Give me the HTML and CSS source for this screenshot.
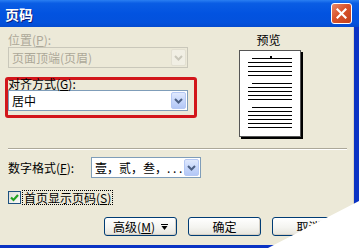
FILE: index.html
```html
<!DOCTYPE html>
<html lang="zh-CN">
<head>
  <meta charset="UTF-8">
  <title>页码</title>
  <link rel="stylesheet" href="styles.css">
</head>
<body>
  <div class="window">
    <div class="titlebar">
      <span class="title">页码</span>
      <span class="close">
        <svg width="11" height="11" viewBox="0 0 11 11"><path d="M1.5 1.5 L9.5 9.5 M9.5 1.5 L1.5 9.5" stroke="#fff" stroke-width="2.2" stroke-linecap="square"/></svg>
      </span>
    </div>
    <div class="frame">
      <div class="client">
        <div class="top">
          <div class="left">
            <div class="label is-disabled">位置(<u>P</u>):</div>
            <div class="combo is-disabled">
              <span class="value">页面顶端(页眉)</span>
              <span class="arrow"><svg width="9" height="6" viewBox="0 0 9 6"><path d="M1 1 L4.5 4.5 L8 1" fill="none" stroke="#c9c7ba" stroke-width="2"/></svg></span>
            </div>
            <!-- 红框标注 -->
            <div class="mark">
              <div class="label">对齐方式(<u>G</u>):</div>
              <div class="combo">
                <span class="value">居中</span>
                <span class="arrow"><svg width="9" height="6" viewBox="0 0 9 6"><path d="M1 1 L4.5 4.5 L8 1" fill="none" stroke="#4d6185" stroke-width="2"/></svg></span>
              </div>
            </div>
          </div>
          <div class="preview">
            <div class="preview-title">预览</div>
            <div class="page">
              <svg width="60" height="85" viewBox="0 0 60 85">
                <g stroke="#000" stroke-width="1">
                  <path d="M12 7.5 H52"/>
                  <path d="M8 11.5 H52 M8 15.5 H52 M8 20.5 H52 M8 24.5 H52"/>
                  <path d="M12 32.5 H52"/>
                  <path d="M8 36.5 H52 M8 40.5 H52 M8 44.5 H52 M8 48.5 H52"/>
                  <path d="M12 56.5 H52"/>
                  <path d="M8 60.5 H52 M8 64.5 H52 M8 68.5 H52 M8 72.5 H52 M8 76.5 H52"/>
                </g>
                <rect x="30" y="5" width="2" height="2" fill="#000"/>
              </svg>
            </div>
          </div>
        </div>
        <div class="sep"></div>
        <div class="format">
          <span class="label">数字格式(<u>F</u>):</span>
          <div class="combo narrow">
            <span class="value">壹，贰，叁，. . .</span>
            <span class="arrow"><svg width="9" height="6" viewBox="0 0 9 6"><path d="M1 1 L4.5 4.5 L8 1" fill="none" stroke="#4d6185" stroke-width="2"/></svg></span>
          </div>
        </div>
        <div class="check-row">
          <span class="check">
            <svg width="11" height="11" viewBox="0 0 11 11"><path d="M2 5.5 L4.5 8 L9 3" fill="none" stroke="#21a121" stroke-width="2.2"/></svg>
          </span>
          <span class="focus">首页显示页码(<u>S</u>)</span>
        </div>
        <div class="buttons">
          <button class="btn">高级(<u>M</u>)
            <svg class="more" width="7" height="8" viewBox="0 0 7 8"><path d="M0 1.5 H7" stroke="#000"/><path d="M0.5 3 H6.5 L3.5 7 Z" fill="#000"/></svg>
          </button>
          <button class="btn">确定</button>
          <button class="btn">取消</button>
        </div>
      </div>
    </div>
    <div class="curl"></div>
  </div>
</body>
</html>
```

FILE: styles.css
```css
/* 基础 */
body{
  margin:0;
  font-family:"Noto Sans CJK SC","Liberation Sans",sans-serif;
  font-size:12px;
  color:#000;
}
u{
  text-decoration:underline;
}
.window{
  width:359px;
  height:248px;
  position:relative;
  overflow:hidden;
  display:flex;
  flex-direction:column;
  background:#0831d9;
}
/* 标题栏 */
.titlebar{
  height:27px;
  flex:none;
  display:flex;
  align-items:center;
  justify-content:space-between;
  padding:0 7px 0 5px;
  background:linear-gradient(#2a7ff2 0%,#0a5de4 12%,#0253e0 50%,#0351dc 85%,#044bcf 100%);
  box-sizing:border-box;
}
.title{
  color:#fff;
  font-size:14px;
  font-weight:bold;
  text-shadow:1px 1px 0 #0a1e7a;
}
.close{
  width:21px;
  height:21px;
  box-sizing:border-box;
  border:1px solid #fff;
  border-radius:3px;
  background:linear-gradient(135deg,#e9896a 0%,#d9532c 45%,#c2401c 100%);
  display:flex;
  align-items:center;
  justify-content:center;
}
.close svg{
  display:block;
}
.frame{
  flex:1;
  display:flex;
  padding:0 5px 3px 0;
  background:#0a33c4;
}
.client{
  flex:1;
  background:#ece9d8;
  border-right:1px solid #d8d4c4;
  display:flex;
  flex-direction:column;
}
/* 上部 */
.top{
  display:flex;
  align-items:flex-start;
  padding:6px 0 0 8px;
}
.left{
  width:186px;
}
.label{
  line-height:14px;
  white-space:nowrap;
}
.label.is-disabled{
  color:#aca899;
}
.combo{
  width:180px;
  height:21px;
  box-sizing:border-box;
  border:1px solid #7f9db9;
  background:#fff;
  display:flex;
  align-items:center;
  padding:1px;
}
.combo .value{
  flex:1;
  padding-left:2px;
  white-space:nowrap;
  line-height:17px;
}
.combo .arrow{
  width:15px;
  height:17px;
  box-sizing:border-box;
  border:1px solid #b5c8f4;
  border-radius:2px;
  background:linear-gradient(#e0e9fd,#c3d4fa 60%,#b3c7f6);
  display:flex;
  align-items:center;
  justify-content:center;
}
.combo .arrow svg{
  display:block;
}
.combo.is-disabled{
  border-color:#c9c7ba;
  background:#ece9d8;
}
.combo.is-disabled .value{
  color:#aca899;
}
.combo.is-disabled .arrow{
  border-color:#e3e0d2;
  background:#f1efe4;
}
.mark{
  margin:9px -3px 0 -3px;
  border:3px solid #d2161b;
  border-radius:3px;
  padding:0 6px 4px 0;
}
.mark .label{
  line-height:12px;
  margin-top:-2px;
}
/* 预览 */
.preview{
  width:62px;
  margin-left:45px;
}
.preview-title{
  text-align:center;
  line-height:14px;
  padding-right:3px;
}
.page{
  margin-top:3px;
  width:62px;
  height:87px;
  box-sizing:border-box;
  border:1px solid #555;
  background:#fff;
  box-shadow:2px 2px 0 #000;
}
.page svg{
  display:block;
}
.sep{
  margin:11px 6px 0 8px;
  border-top:1px solid #aca899;
  border-bottom:1px solid #fff;
}
/* 数字格式 */
.format{
  display:flex;
  align-items:center;
  margin-top:7px;
  padding-left:8px;
}
.format .label{
  width:83px;
}
.combo.narrow{
  width:110px;
}
/* 复选框 */
.check-row{
  display:flex;
  align-items:center;
  margin-top:12px;
  padding-left:8px;
}
.check{
  width:13px;
  height:13px;
  box-sizing:border-box;
  border:1px solid #1c5180;
  background:linear-gradient(135deg,#dcdcd7,#fbfbf9);
  display:flex;
  align-items:center;
  justify-content:center;
}
.check svg{
  display:block;
}
.focus{
  margin-left:1px;
  padding:0 1px;
  border:1px dotted #000;
  line-height:13px;
}
/* 按钮 */
.buttons{
  display:flex;
  justify-content:flex-end;
  gap:11px;
  margin-top:12px;
  padding-right:8px;
}
.btn{
  width:73px;
  height:19px;
  box-sizing:border-box;
  padding:0;
  font:inherit;
  line-height:15px;
  color:#000;
  border:1px solid #003c74;
  border-radius:3px;
  background:linear-gradient(#ffffff,#f4f4f0 55%,#e6e4dc);
  box-shadow:inset -1px -1px 0 #d6d0c5;
  display:flex;
  align-items:center;
  justify-content:center;
}
.btn .more{
  margin-left:6px;
}
/* 右下角白色遮挡 */
.curl{
  position:absolute;
  right:0;
  bottom:0;
  width:91px;
  height:47px;
  background:#fff;
  clip-path:polygon(0 100%,100% 0,100% 100%);
}
```
